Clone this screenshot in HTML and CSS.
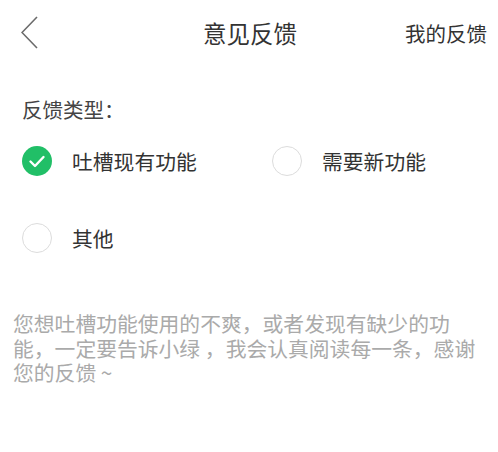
FILE: index.html
```html
<!DOCTYPE html>
<html lang="zh-CN">
<head>
    <meta charset="UTF-8">
    <meta name="viewport" content="width=device-width, initial-scale=1.0">
    <title>意见反馈</title>
    <link rel="stylesheet" href="styles.css">
</head>
<body>
    <div class="header">
        <div class="back">
            <svg width="18" height="34" viewBox="0 0 18 34">
                <polyline points="16,1 1,16.5 16,32" fill="none" stroke="#6b6b6b" stroke-width="1.6"/>
            </svg>
        </div>
        <div class="title">意见反馈</div>
        <div class="mine">我的反馈</div>
    </div>

    <div class="label">反馈类型：</div>

    <div class="options">
        <div class="option checked">
            <span class="radio">
                <svg width="30" height="30" viewBox="0 0 30 30">
                    <polyline points="8.5,15.5 13,20 21.5,11" fill="none" stroke="#fff" stroke-width="2.4" stroke-linecap="round" stroke-linejoin="round"/>
                </svg>
            </span>
            吐槽现有功能
        </div>
        <div class="option">
            <span class="radio"></span>
            需要新功能
        </div>
        <div class="option">
            <span class="radio"></span>
            其他
        </div>
    </div>

    <p class="hint">您想吐槽功能使用的不爽，或者发现有缺少的功能，一定要告诉小绿 ，我会认真阅读每一条，感谢您的反馈 ~</p>
</body>
</html>
```

FILE: styles.css
```css
* {
    box-sizing: border-box;
}

body {
    margin: 0;
    background: #fff;
    color: #333;
    font-family: "Noto Sans CJK SC", "Noto Sans", sans-serif;
}

/* 顶部导航 */
.header {
    height: 66px;
    display: grid;
    grid-template-columns: 1fr auto 1fr;
    align-items: center;
    padding: 0 11px 0 21px;
}

.back svg {
    display: block;
}

.title {
    margin-right: 8px;
    font-size: 23.5px;
    color: #333;
}

.mine {
    justify-self: end;
    font-size: 20.5px;
    color: #333;
}

/* 反馈类型 */
.label {
    margin: 29px 0 0 22px;
    font-size: 20.5px;
    line-height: 28px;
    color: #444;
}

.options {
    display: grid;
    grid-template-columns: 250px 1fr;
    row-gap: 47px;
    margin: 23px 0 0 22px;
}

.option {
    display: flex;
    align-items: center;
    gap: 20px;
    height: 30px;
    font-size: 20.8px;
    color: #333;
}

.radio {
    width: 30px;
    height: 30px;
    border-radius: 50%;
    border: 1px solid #dcdcdc;
    flex-shrink: 0;
}

.radio svg {
    display: block;
}

.option.checked .radio {
    border: none;
    background: #21bf67;
}

/* 说明文字 */
.hint {
    margin: 58px 0 0;
    padding: 0 13px;
    width: 498px;
    font-size: 20.8px;
    line-height: 24.5px;
    color: #aaa;
}
```
